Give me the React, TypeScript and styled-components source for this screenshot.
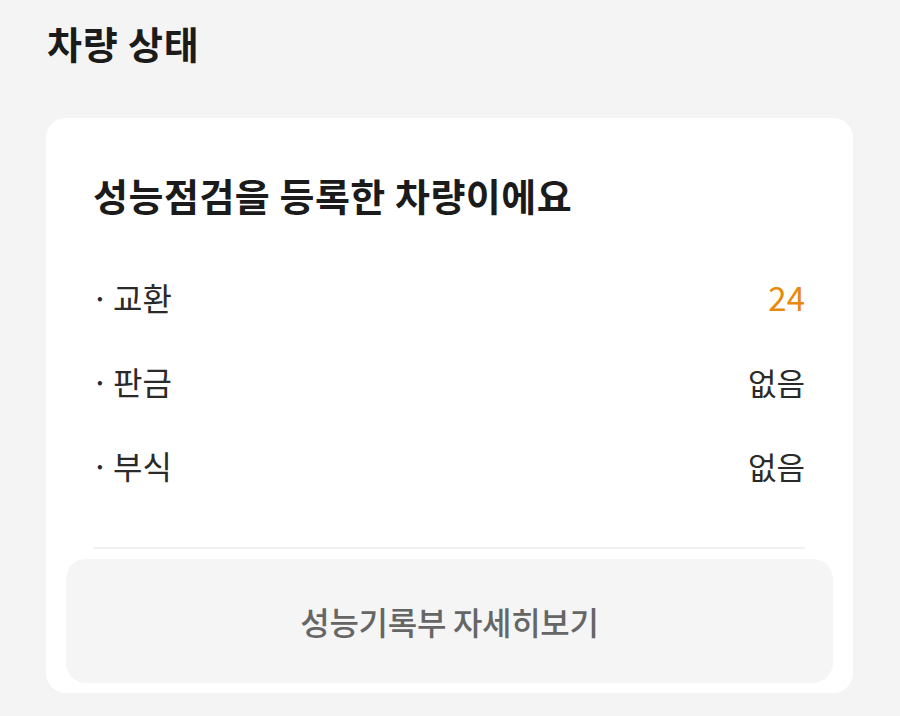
import React from "react";
import styled, { createGlobalStyle } from "styled-components";

const Global = createGlobalStyle`
  html, body { margin: 0; padding: 0; background: #f4f4f4; }
  body { font-family: "Noto Sans CJK KR", "Noto Sans", sans-serif; }
`;

const Page = styled.div`
  padding: 19px 47px 0 46px;
  width: 900px;
  box-sizing: border-box;
`;

const PageTitle = styled.h1`
  margin: 0 0 51px 1px;
  font-size: 38px;
  line-height: 48px;
  font-weight: 700;
  color: #1b1b1b;
  letter-spacing: 0.8px;
`;

const Card = styled.section`
  background: #ffffff;
  border-radius: 20px;
  padding: 53px 20px 10px;
`;

const Inner = styled.div`
  padding: 0 28px 0 27px;
`;

const Heading = styled.h2`
  margin: 0 0 60px;
  font-size: 38px;
  line-height: 48px;
  font-weight: 700;
  color: #1b1b1b;
  letter-spacing: 0.5px;
`;

const List = styled.ul`
  list-style: none;
  margin: 0;
  padding: 0;
  display: flex;
  flex-direction: column;
  gap: 48px;
`;

const Row = styled.li`
  display: flex;
  justify-content: space-between;
  align-items: center;
  height: 36px;
  font-size: 32px;
  color: #2a2a2a;
`;

const Label = styled.span`
  display: flex;
  align-items: center;
`;

const Dot = styled.span`
  margin-right: 4px;
  margin-left: -2px;
`;

const Value = styled.span<{ $accent?: boolean }>`
  color: ${(p) => (p.$accent ? "#e8890a" : "#2a2a2a")};
  font-size: ${(p) => (p.$accent ? "33px" : "31px")};
`;

const Divider = styled.hr`
  margin: 64px 0 10px;
  border: none;
  height: 2px;
  background: #f1f1f1;
`;

const DetailButton = styled.button`
  display: flex;
  align-items: center;
  justify-content: center;
  width: 100%;
  height: 124px;
  border: none;
  border-radius: 20px;
  background: #f5f5f5;
  font-family: inherit;
  font-size: 32px;
  font-weight: 500;
  color: #666666;
  letter-spacing: -0.3px;
  cursor: pointer;
`;

const rows = [
  { label: "교환", value: "24", accent: true },
  { label: "판금", value: "없음" },
  { label: "부식", value: "없음" },
];

export default function App() {
  return (
    <>
      <Global />
      <Page>
        <PageTitle>차량 상태</PageTitle>
        <Card>
          <Inner>
            <Heading>성능점검을 등록한 차량이에요</Heading>
            <List>
              {rows.map((r) => (
                <Row key={r.label}>
                  <Label>
                    <Dot>·</Dot>
                    {r.label}
                  </Label>
                  <Value $accent={r.accent}>{r.value}</Value>
                </Row>
              ))}
            </List>
            <Divider />
          </Inner>
          <DetailButton>성능기록부 자세히보기</DetailButton>
        </Card>
      </Page>
    </>
  );
}
